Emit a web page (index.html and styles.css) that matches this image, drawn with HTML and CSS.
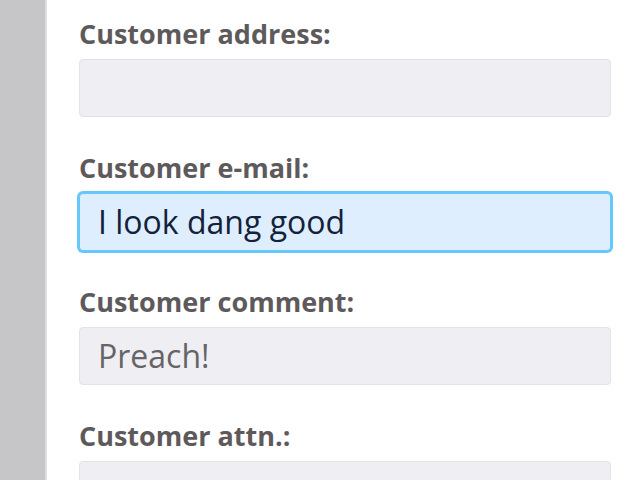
FILE: index.html
```html
<!DOCTYPE html>
<html>
<head>
<meta charset="utf-8">
<link rel="stylesheet" href="styles.css">
</head>
<body>
<div class="app">
  <aside class="sidebar"></aside>
  <main class="content">
    <div class="field">
      <label class="label">Customer address:</label>
      <div class="input"></div>
    </div>
    <div class="field">
      <label class="label">Customer e-mail:</label>
      <div class="input focused">I look dang good</div>
    </div>
    <div class="field">
      <label class="label">Customer comment:</label>
      <div class="input">Preach!</div>
    </div>
    <div class="field">
      <label class="label">Customer attn.:</label>
      <div class="input"></div>
    </div>
  </main>
</div>
</body>
</html>
```
FILE: styles.css
```css
html, body {
  margin: 0;
  padding: 0;
  background: #ffffff;
  overflow: hidden;
}
.app {
  display: flex;
  height: 480px;
}
.sidebar {
  width: 45px;
  flex: none;
  background: #c6c6c8;
  border-right: 2px solid #dcdcde;
}
.content {
  flex: 1;
  padding: 17px 29px 0 32px;
  display: flex;
  flex-direction: column;
  gap: 34px;
}
.field {
  display: flex;
  flex-direction: column;
  gap: 8px;
}
.label {
  font-family: "Open Sans", sans-serif;
  font-weight: bold;
  font-size: 27px;
  line-height: 34px;
  color: #5e5a5c;
}
.input {
  box-sizing: border-box;
  height: 58px;
  border: 1px solid #e3e3e7;
  border-radius: 4px;
  background: #efeff3;
  padding: 0 18px;
  font-family: "Open Sans", sans-serif;
  font-size: 32px;
  line-height: 56px;
  color: #666466;
}
.input.focused {
  background: #dfeefe;
  border-color: #66c8fa;
  box-shadow: 0 0 0 2px #66c8fa;
  color: #12223a;
}
```
